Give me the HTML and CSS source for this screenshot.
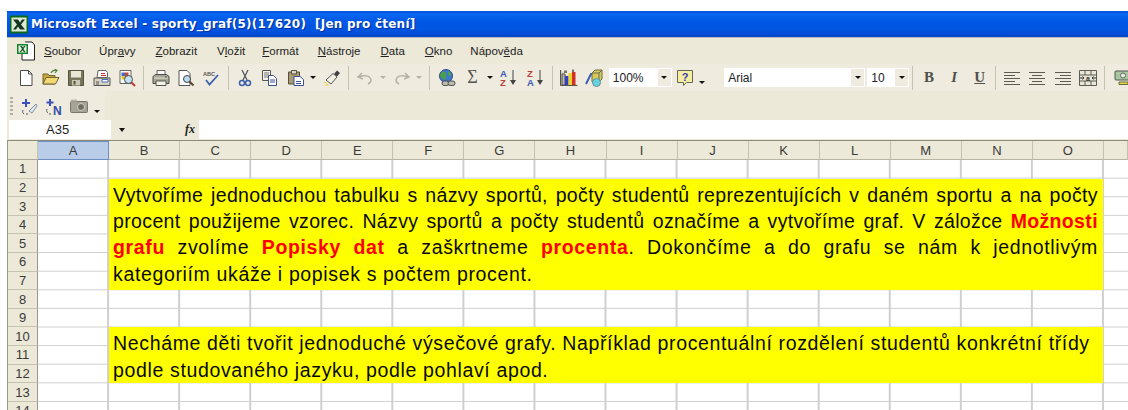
FILE: index.html
```html
<!DOCTYPE html>
<html lang="cs">
<head>
<meta charset="utf-8">
<title>Microsoft Excel - sporty_graf</title>
<link rel="stylesheet" href="styles.css">
</head>
<body>
<svg class="sprite" width="0" height="0">
  <symbol id="i-new" viewBox="0 0 18 18"><path d="M3.5 1.5h8l3.5 3.5v11.5H3.5z" fill="#fff" stroke="#4a4a4a"/><path d="M11.5 1.5V5H15" fill="none" stroke="#4a4a4a"/></symbol>
  <symbol id="i-open" viewBox="0 0 18 18"><path d="M1 5h5l1 1.500h6V15H1z" fill="#c9a93c" stroke="#6e6330"/><path d="M1 15l3-6.500h13L13.500 15z" fill="#f2d875" stroke="#6e6330"/><path d="M9 4c1-2.500 3-3 5.500-2.500M12.500 0l2.500 1.500L13 4" fill="none" stroke="#4f7f3a" stroke-width="1.200"/></symbol>
  <symbol id="i-save" viewBox="0 0 18 18"><path d="M1.500 1.500h15v15h-15z" fill="#77775c" stroke="#55553f"/><path d="M4 2h10v6.500H4z" fill="#e8e6d5"/><path d="M5 11h8v5.500H5z" fill="#c9c8b4"/><path d="M6.500 12h2v3.500h-2z" fill="#55553f"/></symbol>
  <symbol id="i-perm" viewBox="0 0 18 18"><path d="M5 1.500h8l1.500 2v5H4z" fill="#fff" stroke="#666"/><path d="M1 9h16v7.500H1z" fill="#d5d3c2" stroke="#555"/><path d="M9 10.500h6v2.500H9z" fill="#fff" stroke="#4a6fbf"/><path d="M3 13h3M3 15h3" stroke="#555"/><path d="M8 4.500h4M8 6.500h5" stroke="#c9372c"/></symbol>
  <symbol id="i-web" viewBox="0 0 18 18"><path d="M2 1.500h11v13H2z" fill="#fff" stroke="#666"/><path d="M3.500 3.500h3.500v3.500H3.500z" fill="#3d6fc6"/><path d="M7 3.500h3.500v3.500H7z" fill="#d0452f"/><path d="M3.500 7h3.500v3.500H3.500z" fill="#e1c43a"/><path d="M7 7h3.500v3.500H7z" fill="#4b9d48"/><circle cx="10.500" cy="10.500" r="4" fill="#bfe3f2" stroke="#4a4a4a"/><path d="M13.500 13.500l3.500 3.500" stroke="#c9372c" stroke-width="2"/></symbol>
  <symbol id="i-print" viewBox="0 0 18 18"><path d="M5 1.500h8v6H5z" fill="#fff" stroke="#666"/><path d="M1 7.500l2.500-2h11l2.500 2v7H1z" fill="#a8a796" stroke="#4a4a4a"/><path d="M2 9h14" stroke="#e3e1cf"/><path d="M4 12h10v4.500H4z" fill="#f4f3e8" stroke="#555"/><path d="M13 8h2" stroke="#53545a"/></symbol>
  <symbol id="i-pview" viewBox="0 0 18 18"><path d="M2 1.500h8l3 3v12H2z" fill="#fff" stroke="#555"/><circle cx="10" cy="10" r="3.500" fill="#bcdcef" stroke="#444"/><path d="M12.500 12.500l4 4" stroke="#554b33" stroke-width="2"/></symbol>
  <symbol id="i-spell" viewBox="0 0 18 18"><text x="1" y="7" class="tiny">ABC</text><path d="M4 11l3.500 4.500L16 6" fill="none" stroke="#3a62b0" stroke-width="1.800"/></symbol>
  <symbol id="i-cut" viewBox="0 0 18 18"><path d="M6 1l5 10M12 1L7 11" stroke="#55565c" stroke-width="1.300"/><circle cx="6" cy="14" r="2.500" fill="none" stroke="#3d5fa8" stroke-width="1.500"/><circle cx="12" cy="14" r="2.500" fill="none" stroke="#3d5fa8" stroke-width="1.500"/></symbol>
  <symbol id="i-copy" viewBox="0 0 18 18"><path d="M1.500 1.500h8v10h-8z" fill="#f4f3e8" stroke="#555"/><path d="M3 4h5M3 6h5M3 8h5" stroke="#777"/><path d="M7.500 6.500h5l3 3v7h-8z" fill="#fff" stroke="#3a4f96"/><path d="M9 11h5M9 13h5" stroke="#3a4f96"/></symbol>
  <symbol id="i-paste" viewBox="0 0 18 18"><path d="M1.500 3h11v12h-11z" fill="#a89a72" stroke="#55503a"/><path d="M4.500 1.500h5V5h-5z" fill="#d8d6c5" stroke="#55503a"/><path d="M7 7.500h6l3.500 3v6H7z" fill="#fff" stroke="#3a4f96"/><path d="M9 12.500h5M9 14.500h5" stroke="#3a4f96"/></symbol>
  <symbol id="i-brush" viewBox="0 0 18 18"><path d="M11 5l3-3.500 3 2.500-3 3.500z" fill="#3f3f45"/><path d="M3 11l7-6.500 4 3.500-6 7z" fill="#f1f0e2" stroke="#55565c"/><path d="M1 16l4-1 1 2z" fill="#e6d64a"/><path d="M1 13l3 1" stroke="#e6d64a"/></symbol>
  <symbol id="i-undo" viewBox="0 0 18 18"><path d="M6 4L2 8l5 2M3 8c5-2 11-2 12 3 0 2-1 3-3 4" fill="none" stroke="#b5b3a5" stroke-width="1.500"/></symbol>
  <symbol id="i-redo" viewBox="0 0 18 18"><path d="M12 4l4 4-5 2M15 8c-5-2-11-2-12 3 0 2 1 3 3 4" fill="none" stroke="#b5b3a5" stroke-width="1.500"/></symbol>
  <symbol id="i-globe" viewBox="0 0 18 18"><circle cx="8" cy="7" r="6.500" fill="#3d78c9" stroke="#2d4a86"/><path d="M4 2.500c3 0 5 1 4 3.500-1 2 1 3-1 5-2-1-5-3-5-5z" fill="#4aa04a"/><path d="M10 2c2 1 4 3 3 5l-3-1z" fill="#4aa04a"/><rect x="4" y="12" width="7" height="4.500" rx="2.200" fill="#bdbcae" stroke="#4a4a4a"/><rect x="10" y="12" width="7" height="4.500" rx="2.200" fill="#bdbcae" stroke="#4a4a4a"/></symbol>
  <symbol id="i-az" viewBox="0 0 18 18"><text x="0" y="8" class="sort blue">A</text><text x="0" y="17" class="sort red">Z</text><path d="M13 1v11" stroke="#444"/><path d="M10 11h6l-3 5z" fill="#444"/></symbol>
  <symbol id="i-za" viewBox="0 0 18 18"><text x="0" y="8" class="sort red">Z</text><text x="0" y="17" class="sort blue">A</text><path d="M13 1v11" stroke="#444"/><path d="M10 11h6l-3 5z" fill="#444"/></symbol>
  <symbol id="i-chart" viewBox="0 0 18 18"><path d="M.5 1v15.500h17" fill="#cfcdbc" stroke="#55554a"/><path d="M2 5h3v11H2z" fill="#b9b7a6" stroke="#555"/><path d="M5 7h3.500v9H5z" fill="#2f3ed0"/><path d="M8.500 4H12v12H8.500z" fill="#ead32a"/><path d="M12 3h3.500v13H12z" fill="#d33028"/><path d="M4 1.500h3V4H4zM12 .5h2V3h-2z" fill="#77776a"/></symbol>
  <symbol id="i-draw" viewBox="0 0 18 18"><path d="M1 15L6 5h2l2 10" fill="none" stroke="#3d5fb8" stroke-width="2"/><path d="M7 4l3-3h7v9l-3 3H7z" fill="#d7c95a" stroke="#6a6a4a"/><path d="M7 4h7v9M14 4l3-3" fill="none" stroke="#6a6a4a"/><circle cx="11.500" cy="13.500" r="4" fill="#63d4e0" stroke="#6a8f9a"/></symbol>
  <symbol id="i-help" viewBox="0 0 18 18"><path d="M1.500 1.500h15v12h-6l-3 3v-3h-6z" fill="#f5eda0" stroke="#66665a"/><text x="9" y="12" class="q">?</text></symbol>
  <symbol id="i-left" viewBox="0 0 18 18"><path d="M1 3.500h16M1 6.500h11M1 9.500h16M1 12.500h11M1 15.500h16" stroke="#5c5c55"/></symbol>
  <symbol id="i-center" viewBox="0 0 18 18"><path d="M1 3.500h16M4 6.500h10M1 9.500h16M4 12.500h10M1 15.500h16" stroke="#5c5c55"/></symbol>
  <symbol id="i-right" viewBox="0 0 18 18"><path d="M1 3.500h16M6 6.500h11M1 9.500h16M6 12.500h11M1 15.500h16" stroke="#5c5c55"/></symbol>
  <symbol id="i-merge" viewBox="0 0 18 18"><path d="M.5 1.500h17v15H.5z" fill="#e8e6d6" stroke="#5c5c55"/><path d="M.5 6h17M.5 12h17M6 1.500V6M12 1.500V6M6 12v4.500M12 12v4.500" stroke="#5c5c55"/><path d="M1 9h4M13 9h4M3.500 7.500L5 9l-1.500 1.500M14.500 7.500L13 9l1.500 1.500" fill="none" stroke="#333"/><text x="9" y="11.500" class="merge-a">a</text></symbol>
  <symbol id="i-money" viewBox="0 0 18 18"><rect x="1" y="2" width="16" height="9" rx="1" fill="#a8c79f" stroke="#555"/><circle cx="9" cy="6.500" r="2.500" fill="#e4efdf" stroke="#666"/><path d="M5 13h9v2.500H5z" fill="#e6d64a" stroke="#6a6a3a"/></symbol>
  <symbol id="i-spark" viewBox="0 0 18 18"><path d="M6 1v8M2 5h8" stroke="#3a4fb8" stroke-width="2"/><path d="M9 13l7-7 1 2-5 7z" fill="#dfe7ef" stroke="#7f8fa5"/><path d="M3 12c-1 2 0 3 1 4M8 16H6" fill="none" stroke="#555"/></symbol>
  <symbol id="i-spark-n" viewBox="0 0 18 18"><path d="M5 1v7M1.500 4.500h7" stroke="#3a4fb8" stroke-width="2"/><text x="8" y="17" class="spark-n">N</text><path d="M2 11c-1 2 0 3 1 4M6 16H4" fill="none" stroke="#555"/></symbol>
  <symbol id="i-camera" viewBox="0 0 18 18"><rect x=".5" y="3.500" width="17" height="11" rx="1" fill="#a5a497" stroke="#77776a"/><path d="M1 1.500h6v2H1z" fill="#b9b8aa"/><circle cx="11" cy="9" r="3.500" fill="#6f6f66" stroke="#d0cfc2"/></symbol>
  <symbol id="i-xl" viewBox="0 0 18 18"><path d="M0 0h18v18H0z" fill="#0a6a1c"/><path d="M1.500 2h15v14h-15z" fill="#dfe9d6"/><path d="M3 4h5l2 3 2-3h3l-4 5 4 5h-5l-2-3-2 3H3l4-5z" fill="#12351c"/></symbol>
  <symbol id="i-doc" viewBox="0 0 20 20"><path d="M9 1h7l2.500 3v15H6V9" fill="#fff" stroke="#222"/><path d="M1 3h11v10H1z" fill="#13822a"/><path d="M2.500 4.500h8v7h-8z" fill="#e9f2e2"/><path d="M4 5h2l1 1.500L8 5h1.500L7.500 8l2 3H8L6.500 9.500 5 11H3.500l2.500-3z" fill="#13602a"/></symbol>
</svg>

<div class="window">
  <header class="titlebar">
    <svg class="app-icon"><use href="#i-xl"/></svg>
    <h1 class="title">Microsoft Excel - sporty_graf(5)(17620)&nbsp; [Jen pro čtení]</h1>
  </header>

  <nav class="menubar">
    <svg class="doc-icon"><use href="#i-doc"/></svg>
    <span class="menu m1"><u>S</u>oubor</span>
    <span class="menu m2">Úpr<u>a</u>vy</span>
    <span class="menu m3"><u>Z</u>obrazit</span>
    <span class="menu m4">V<u>l</u>ožit</span>
    <span class="menu m5"><u>F</u>ormát</span>
    <span class="menu m6"><u>N</u>ástroje</span>
    <span class="menu m7"><u>D</u>ata</span>
    <span class="menu m8"><u>O</u>kno</span>
    <span class="menu m9">Nápov<u>ě</u>da</span>
  </nav>

  <div class="toolbar">
    <span class="grip"></span>
    <span class="btn"><svg><use href="#i-new"/></svg></span>
    <span class="btn"><svg><use href="#i-open"/></svg></span>
    <span class="btn"><svg><use href="#i-save"/></svg></span>
    <span class="btn"><svg><use href="#i-perm"/></svg></span>
    <span class="btn"><svg><use href="#i-web"/></svg></span>
    <span class="sep"></span>
    <span class="btn"><svg><use href="#i-print"/></svg></span>
    <span class="btn"><svg><use href="#i-pview"/></svg></span>
    <span class="btn"><svg><use href="#i-spell"/></svg></span>
    <span class="sep"></span>
    <span class="btn"><svg><use href="#i-cut"/></svg></span>
    <span class="btn"><svg><use href="#i-copy"/></svg></span>
    <span class="btn"><svg><use href="#i-paste"/></svg></span>
    <span class="drop"></span>
    <span class="btn"><svg><use href="#i-brush"/></svg></span>
    <span class="sep"></span>
    <span class="btn"><svg><use href="#i-undo"/></svg></span>
    <span class="drop off"></span>
    <span class="btn"><svg><use href="#i-redo"/></svg></span>
    <span class="drop off"></span>
    <span class="sep wide"></span>
    <span class="btn"><svg><use href="#i-globe"/></svg></span>
    <span class="btn sigma">Σ</span>
    <span class="drop"></span>
    <span class="btn"><svg><use href="#i-az"/></svg></span>
    <span class="btn spaced"><svg><use href="#i-za"/></svg></span>
    <span class="sep tight"></span>
    <span class="btn"><svg><use href="#i-chart"/></svg></span>
    <span class="btn"><svg><use href="#i-draw"/></svg></span>
    <span class="combo zoom-combo">100%<i class="combo-arrow"></i></span>
    <span class="btn"><svg><use href="#i-help"/></svg></span>
    <span class="drop low"></span>
    <span class="grip second"></span>
    <span class="combo font-combo">Arial<i class="combo-arrow"></i></span>
    <span class="combo size-combo">10<i class="combo-arrow"></i></span>
    <span class="sep tight"></span>
    <span class="btn fmt bold">B</span>
    <span class="btn fmt italic">I</span>
    <span class="btn fmt under">U</span>
    <span class="sep tight"></span>
    <span class="btn"><svg><use href="#i-left"/></svg></span>
    <span class="btn"><svg><use href="#i-center"/></svg></span>
    <span class="btn"><svg><use href="#i-right"/></svg></span>
    <span class="btn"><svg><use href="#i-merge"/></svg></span>
    <span class="sep wide"></span>
    <span class="btn"><svg><use href="#i-money"/></svg></span>
  </div>

  <div class="toolbar-row">
    <div class="toolbar short">
      <span class="grip"></span>
      <span class="btn"><svg><use href="#i-spark"/></svg></span>
      <span class="btn"><svg><use href="#i-spark-n"/></svg></span>
      <span class="btn"><svg><use href="#i-camera"/></svg></span>
      <span class="drop low"></span>
    </div>
  </div>

  <div class="formula-bar">
    <span class="name-box">A35</span>
    <i class="name-arrow"></i>
    <span class="fx">fx</span>
    <span class="formula-input"></span>
  </div>

  <section class="sheet">
    <div class="col-heads">
      <span class="corner"></span>
      <span class="col active">A</span><span class="col">B</span><span class="col">C</span><span class="col">D</span><span class="col">E</span><span class="col">F</span><span class="col">G</span><span class="col">H</span><span class="col">I</span><span class="col">J</span><span class="col">K</span><span class="col">L</span><span class="col">M</span><span class="col">N</span><span class="col">O</span><span class="col"></span>
    </div>
    <div class="cells">
      <span class="row r1">1</span>
      <span class="row r2">2</span>
      <span class="row r3">3</span>
      <span class="row r4">4</span>
      <span class="row r5">5</span>
      <span class="row r6">6</span>
      <span class="row r7">7</span>
      <span class="row r8">8</span>
      <span class="row r9">9</span>
      <span class="row r10">10</span>
      <span class="row r11">11</span>
      <span class="row r12">12</span>
      <span class="row r13">13</span>
      <span class="row r14">14</span>

      <div class="note note-a">
        <p class="just snug">Vytvoříme jednoduchou tabulku s názvy sportů, počty studentů reprezentujících v daném sportu a na počty</p>
        <p class="just snug">procent použijeme vzorec. Názvy sportů a počty studentů označíme a vytvoříme graf. V záložce <b>Možnosti</b></p>
        <p class="just"><b>grafu</b> zvolíme <b>Popisky dat</b> a zaškrtneme <b>procenta</b>. Dokončíme a do grafu se nám k jednotlivým</p>
        <p>kategoriím ukáže i popisek s počtem procent.</p>
      </div>
      <div class="note note-b">
        <p>Necháme děti tvořit jednoduché výsečové grafy. Například procentuální rozdělení studentů konkrétní třídy</p>
        <p>podle studovaného jazyku, podle pohlaví apod.</p>
      </div>
    </div>
  </section>
</div>
</body>
</html>
```

FILE: styles.css
```css
html, body {
  margin: 0;
  height: 100%;
  background: #fff;
  overflow: hidden;
}

.sprite { display: none; }

.window {
  margin: 11px 0 0 7px;
  height: 399px;
  overflow: hidden;
  background: #ece9d8;
  font-family: "Liberation Sans", Arial, sans-serif;
}

/* Title bar */
.titlebar {
  height: 26px;
  display: flex;
  align-items: center;
  padding-left: 3px;
  background: linear-gradient(#0050d8 0, #0a66ee 12%, #0058e6 40%, #0054e0 75%, #0046c8 100%);
}
.app-icon { width: 18px; height: 19px; margin-right: 3px; }
.title {
  margin: 0;
  font: bold 12px "DejaVu Sans", sans-serif;
  letter-spacing: .24px;
  color: #fff;
  white-space: pre;
  text-shadow: 1px 1px 0 #0030a0;
}

/* Menu bar */
.menubar {
  height: 26px;
  display: flex;
  align-items: center;
  font-size: 11.500px;
  color: #222;
  border-top: 1px solid #b8b8b8;
}
.doc-icon { width: 20px; height: 20px; margin-left: 9px; }
.menu { white-space: nowrap; }
.m1 { margin-left: 8px; }
.m2 { margin-left: 18px; }
.m3 { margin-left: 20px; }
.m4 { margin-left: 20px; }
.m5 { margin-left: 17px; }
.m6 { margin-left: 19px; }
.m7 { margin-left: 20px; }
.m8 { margin-left: 20px; }
.m9 { margin-left: 18px; }

/* Toolbars */
.toolbar {
  height: 27px;
  display: flex;
  align-items: center;
  background: #efecdf;
  color: #222;
}
.toolbar-row {
  height: 29px;
  display: flex;
  align-items: center;
}
.toolbar.short { width: 98px; height: 27px; padding-top: 2px; }

.grip {
  width: 3px;
  height: 19px;
  margin: 0 3px 0 3px;
  background: repeating-linear-gradient(#b3b1a1 0 2px, transparent 2px 4px);
}
.grip.second { margin: 0 3px 0 13px; }

.btn {
  width: 25.400px;
  height: 20px;
  flex: none;
  display: flex;
  align-items: center;
  justify-content: center;
}
.btn svg { width: 18px; height: 18px; display: block; }
.btn.spaced { margin-left: 2px; }

.sep {
  width: 1px;
  height: 24px;
  margin: 0 3.500px;
  background: #c5c2b0;
  flex: none;
}
.sep.wide { margin-right: 4.500px; }
.sep.tight { margin-left: 2.500px; margin-right: 3.500px; }
.drop {
  width: 0;
  height: 0;
  flex: none;
  margin: 0 3px 0 2px;
  border: 3px solid transparent;
  border-top: 3px solid #111;
  border-bottom: 0;
}
.drop.off { border-top-color: #b5b3a5; }
.drop.low { margin-top: 10px; }

.sigma { font: 18px "Liberation Serif", serif; color: #55554f; }

.fmt { font-size: 15px; color: #50504a; }
.bold { font-family: "Liberation Serif", serif; font-weight: bold; }
.italic { font-family: "Liberation Serif", serif; font-style: italic; font-weight: bold; }
.under { font-family: "Liberation Serif", serif; font-weight: bold; text-decoration: underline; }

.combo {
  height: 19px;
  flex: none;
  display: flex;
  align-items: center;
  justify-content: space-between;
  padding-left: 3px;
  background: #fff;
  font-size: 12px;
  color: #222;
  box-sizing: border-box;
  border: 1px solid #fff;
}
.combo-arrow {
  width: 13px;
  height: 100%;
  flex: none;
  display: flex;
  align-items: center;
  justify-content: center;
  background: #efecdf;
}
.combo-arrow::after {
  content: "";
  border: 3px solid transparent;
  border-top: 3px solid #111;
  border-bottom: 0;
}
.zoom-combo { width: 63px; margin-left: 2px; }
.font-combo { width: 141px; margin-right: 2px; }
.size-combo { width: 42px; }

/* Formula bar */
.formula-bar {
  height: 19px;
  display: flex;
  align-items: center;
  font-size: 13px;
}
.name-box {
  width: 102px;
  height: 100%;
  margin-left: 2px;
  padding-left: 37px;
  box-sizing: border-box;
  display: flex;
  align-items: center;
  background: #fff;
  color: #222;
}
.name-arrow {
  width: 0;
  height: 0;
  margin-left: 8px;
  border: 3.500px solid transparent;
  border-top: 4px solid #111;
  border-bottom: 0;
}
.fx {
  margin-left: 60px;
  width: 14px;
  font: italic bold 12px "Liberation Serif", serif;
  color: #222;
}
.formula-input {
  flex: 1;
  height: 100%;
  background: #fff;
  margin-left: 0;
}

/* Worksheet */
.sheet {
  border-top: 1px solid #8d8b7c;
  margin-top: 1px;
  border-left: 1px solid #9a9886;
  background: #fff;
}
.col-heads,
.cells {
  display: grid;
  grid-template-columns: 30px repeat(15, 71.070px) 1fr;
}
.col-heads { height: 19px; }
.corner,
.col,
.row {
  background: #ece9d8;
  box-sizing: border-box;
  font-size: 13px;
  color: #3a3a3a;
  display: flex;
  align-items: center;
  justify-content: center;
}
.corner { border-right: 1px solid #c5c2b0; border-bottom: 1px solid #aca899; }
.col { border-right: 1px solid #c5c2b0; border-bottom: 1px solid #b8b5a4; }
.col.active { background: #b9cde8; border: 1px solid #6d8fc4; border-left: 0; }

.cells {
  grid-template-rows: repeat(14, 18.620px);
  background-color: #fff;
  background-image:
    linear-gradient(to left, #cfcfcf 1.500px, transparent 1.500px),
    linear-gradient(to top, #cfcfcf 1.200px, transparent 1.200px);
  background-size: 71.070px 18.620px;
  background-position: 30px 0;
}
.row {
  grid-column: 1;
  border-right: 1px solid #9a9886;
  border-bottom: 1px solid #c5c2b0;
}
.r1 { grid-row: 1; } .r2 { grid-row: 2; } .r3 { grid-row: 3; } .r4 { grid-row: 4; }
.r5 { grid-row: 5; } .r6 { grid-row: 6; } .r7 { grid-row: 7; } .r8 { grid-row: 8; }
.r9 { grid-row: 9; } .r10 { grid-row: 10; } .r11 { grid-row: 11; } .r12 { grid-row: 12; }
.r13 { grid-row: 13; } .r14 { grid-row: 14; }

/* Yellow text blocks laid across the cell range */
.note {
  grid-column: 3 / span 14;
  background: #ffff00;
  padding: 3px 5px 0 4px;
  margin-right: 1px;
  font-size: 19.500px;
  letter-spacing: .64px;
  line-height: 26.300px;
  color: #0a0a0a;
}
.note p { margin: 0; white-space: nowrap; }
.note p.just { text-align: justify; text-align-last: justify; white-space: normal; }
.note p.snug { letter-spacing: .35px; }
.note b { color: #ff0000; }
.note-a { grid-row: 2 / span 6; }
.note-b { grid-row: 10 / span 3; }

/* Small letters inside toolbar icons */
.tiny { font: bold 5.500px "Liberation Sans", sans-serif; fill: #555; }
.sort { font: bold 9.500px "Liberation Sans", sans-serif; }
.blue { fill: #3a55b8; }
.red { fill: #b8403a; }
.q { font: bold 11px "Liberation Sans", sans-serif; fill: #3a3fb8; text-anchor: middle; }
.merge-a { font: bold 7px "Liberation Sans", sans-serif; fill: #333; text-anchor: middle; }
.spark-n { font: bold 12px "Liberation Sans", sans-serif; fill: #2f4ea8; }
```
